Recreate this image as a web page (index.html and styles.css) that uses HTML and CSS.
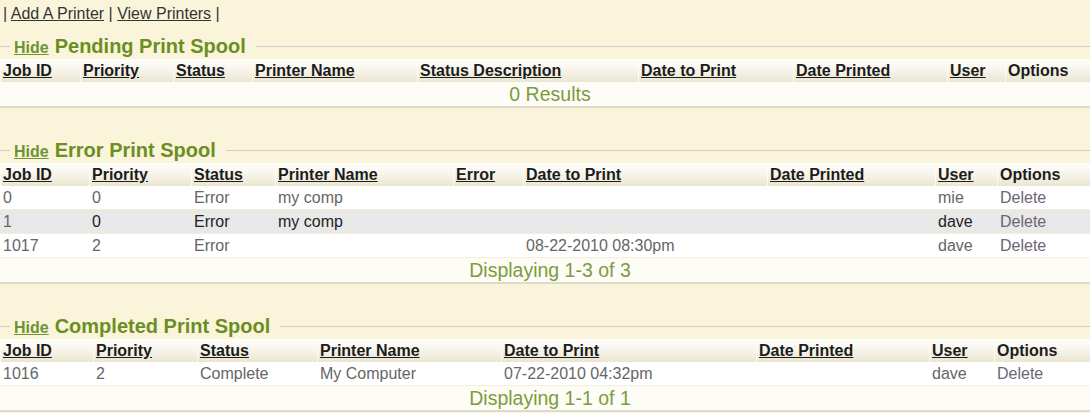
FILE: index.html
```html
<!DOCTYPE html>
<html lang="en">
<head>
<meta charset="utf-8">
<title>Print Spool</title>
<link rel="stylesheet" href="styles.css">
</head>
<body>
<nav class="topnav">| <a href="#">Add A Printer</a> | <a href="#">View Printers</a> |</nav>

<section class="spool">
  <div class="spool-head">
    <span class="rule rule-start"></span>
    <div class="legend"><a class="hide" href="#">Hide</a><h2 class="spool-title">Pending Print Spool</h2></div>
    <span class="rule rule-fill"></span>
  </div>
  <table class="grid grid-pending">
    <colgroup><col><col><col><col><col><col><col><col><col></colgroup>
    <thead>
      <tr>
        <th><a href="#">Job ID</a></th>
        <th><a href="#">Priority</a></th>
        <th><a href="#">Status</a></th>
        <th><a href="#">Printer Name</a></th>
        <th><a href="#">Status Description</a></th>
        <th><a href="#">Date to Print</a></th>
        <th><a href="#">Date Printed</a></th>
        <th><a href="#">User</a></th>
        <th>Options</th>
      </tr>
    </thead>
    <tbody>
      <tr class="foot"><td colspan="9">0 Results</td></tr>
    </tbody>
  </table>
</section>

<section class="spool">
  <div class="spool-head">
    <span class="rule rule-start"></span>
    <div class="legend"><a class="hide" href="#">Hide</a><h2 class="spool-title">Error Print Spool</h2></div>
    <span class="rule rule-fill"></span>
  </div>
  <table class="grid grid-error">
    <colgroup><col><col><col><col><col><col><col><col><col></colgroup>
    <thead>
      <tr>
        <th><a href="#">Job ID</a></th>
        <th><a href="#">Priority</a></th>
        <th><a href="#">Status</a></th>
        <th><a href="#">Printer Name</a></th>
        <th><a href="#">Error</a></th>
        <th><a href="#">Date to Print</a></th>
        <th><a href="#">Date Printed</a></th>
        <th><a href="#">User</a></th>
        <th>Options</th>
      </tr>
    </thead>
    <tbody>
      <tr>
        <td>0</td><td>0</td><td>Error</td><td>my comp</td><td></td><td></td><td></td><td>mie</td><td class="opt">Delete</td>
      </tr>
      <tr class="hl">
        <td class="id">1</td><td>0</td><td>Error</td><td>my comp</td><td></td><td></td><td></td><td>dave</td><td class="opt">Delete</td>
      </tr>
      <tr>
        <td>1017</td><td>2</td><td>Error</td><td></td><td></td><td>08-22-2010 08:30pm</td><td></td><td>dave</td><td class="opt">Delete</td>
      </tr>
      <tr class="foot"><td colspan="9">Displaying 1-3 of 3</td></tr>
    </tbody>
  </table>
</section>

<section class="spool">
  <div class="spool-head">
    <span class="rule rule-start"></span>
    <div class="legend"><a class="hide" href="#">Hide</a><h2 class="spool-title">Completed Print Spool</h2></div>
    <span class="rule rule-fill"></span>
  </div>
  <table class="grid grid-completed">
    <colgroup><col><col><col><col><col><col><col><col></colgroup>
    <thead>
      <tr>
        <th><a href="#">Job ID</a></th>
        <th><a href="#">Priority</a></th>
        <th><a href="#">Status</a></th>
        <th><a href="#">Printer Name</a></th>
        <th><a href="#">Date to Print</a></th>
        <th><a href="#">Date Printed</a></th>
        <th><a href="#">User</a></th>
        <th>Options</th>
      </tr>
    </thead>
    <tbody>
      <tr>
        <td>1016</td><td>2</td><td>Complete</td><td>My Computer</td><td>07-22-2010 04:32pm</td><td></td><td>dave</td><td class="opt">Delete</td>
      </tr>
      <tr class="foot"><td colspan="8">Displaying 1-1 of 1</td></tr>
    </tbody>
  </table>
</section>
</body>
</html>
```

FILE: styles.css
```css
html, body {
  margin: 0;
  padding: 0;
  overflow: hidden;
}

body {
  background: #faf5da;
  font-family: "Liberation Sans", Arial, sans-serif;
  font-size: 16px;
  color: #333;
}

.topnav {
  padding: 5px 3px 11px;
  line-height: 18px;
  color: #333;
}

.topnav a {
  color: #333;
  text-decoration: underline;
}

.spool + .spool {
  margin-top: 30px;
}

.spool-head {
  display: flex;
  align-items: center;
  height: 25px;
}

.rule {
  display: block;
  height: 1px;
  background: #cfcec0;
  border-bottom: 1px solid #f4f1e2;
}

.rule-start {
  width: 10px;
}

.rule-fill {
  flex: 1;
}

.legend {
  display: flex;
  align-items: baseline;
  gap: 6px;
  padding: 0 10px 0 4px;
  line-height: 25px;
}

.hide {
  font-size: 16px;
  font-weight: bold;
  color: #6f9232;
  text-decoration: underline;
}

.spool-title {
  margin: 0;
  font-size: 20px;
  font-weight: bold;
  color: #6b8e23;
}

.grid {
  width: 1090px;
  table-layout: fixed;
  border-collapse: separate;
  border-spacing: 0;
}

.grid th,
.grid td {
  padding: 0 2px 0 3px;
  text-align: left;
  white-space: nowrap;
  overflow: hidden;
  vertical-align: middle;
}

.grid th {
  line-height: 23px;
  font-weight: bold;
  color: #1c1c1c;
  background: linear-gradient(to bottom, #fefefc 0%, #f7f5ec 45%, #ebe6d1 100%);
  box-shadow: inset 1px 0 0 #fcfbf5;
}

.grid th a {
  color: #1c1c1c;
  text-decoration: underline;
}

.grid td {
  line-height: 23px;
  color: #666;
  background: #fff;
  border-bottom: 1px solid #f3eed4;
}

.grid tr.hl td {
  background: #e8e8e8;
  color: #1e1e1e;
}

.grid tr.hl td.id {
  color: #666;
}

.grid td.opt,
.grid tr.hl td.opt {
  color: #6c6676;
}

.grid tr.foot td {
  line-height: 24px;
  padding-left: 12px;
  text-align: center;
  font-size: 19.5px;
  color: #7c9c3c;
  background: #fdfcf7;
  border-bottom: 2px solid #dedac8;
}

/* Column widths: Pending */
.grid-pending col:nth-child(1) { width: 80px; }
.grid-pending col:nth-child(2) { width: 93px; }
.grid-pending col:nth-child(3) { width: 79px; }
.grid-pending col:nth-child(4) { width: 165px; }
.grid-pending col:nth-child(5) { width: 221px; }
.grid-pending col:nth-child(6) { width: 155px; }
.grid-pending col:nth-child(7) { width: 154px; }
.grid-pending col:nth-child(8) { width: 58px; }
.grid-pending col:nth-child(9) { width: 85px; }

/* Column widths: Error */
.grid-error col:nth-child(1) { width: 89px; }
.grid-error col:nth-child(2) { width: 102px; }
.grid-error col:nth-child(3) { width: 84px; }
.grid-error col:nth-child(4) { width: 178px; }
.grid-error col:nth-child(5) { width: 70px; }
.grid-error col:nth-child(6) { width: 244px; }
.grid-error col:nth-child(7) { width: 168px; }
.grid-error col:nth-child(8) { width: 62px; }
.grid-error col:nth-child(9) { width: 93px; }

/* Column widths: Completed */
.grid-completed col:nth-child(1) { width: 93px; }
.grid-completed col:nth-child(2) { width: 104px; }
.grid-completed col:nth-child(3) { width: 120px; }
.grid-completed col:nth-child(4) { width: 184px; }
.grid-completed col:nth-child(5) { width: 255px; }
.grid-completed col:nth-child(6) { width: 173px; }
.grid-completed col:nth-child(7) { width: 65px; }
.grid-completed col:nth-child(8) { width: 96px; }
```
